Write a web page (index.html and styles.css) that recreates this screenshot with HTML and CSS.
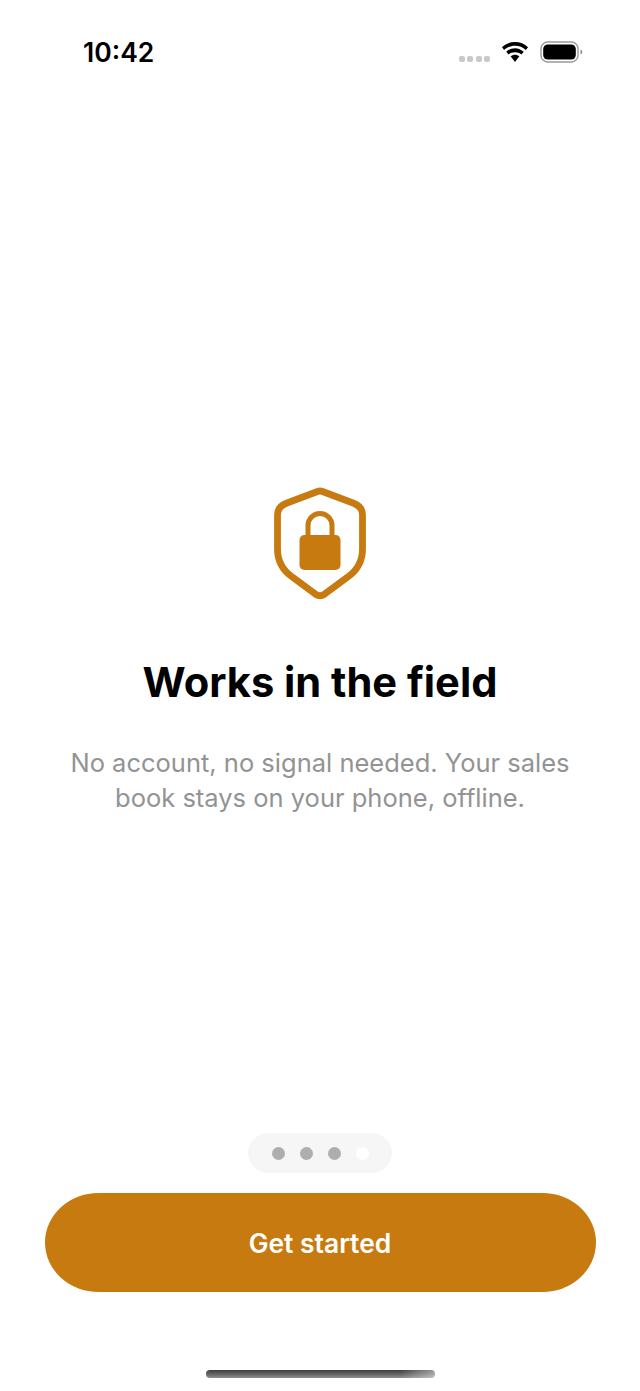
FILE: index.html
```html
<!DOCTYPE html>
<html lang="en">
<head>
<meta charset="utf-8">
<title>Works in the field</title>
<link rel="stylesheet" href="styles.css">
</head>
<body>
<div class="screen">
  <header class="status">
    <span class="time">10:42</span>
    <div class="status-icons">
      <div class="signal"><i></i><i></i><i></i><i></i></div>
      <svg class="wifi" width="26" height="20" viewBox="2 0.7 22 16.900"><path d="M13 3.900c3.500 0 6.800 1.300 9.200 3.500l1.800-2.300C21.100 2.300 17.200.7 13 .7S4.900 2.300 2 5.100l1.800 2.300C6.200 5.200 9.500 3.900 13 3.900z"/><path d="M13 9.300c2.100 0 4 .7 5.500 1.900l1.900-2.300C18.400 7.200 15.800 5.900 13 5.900S7.600 7.200 5.600 8.900l1.900 2.300C9 10 10.900 9.300 13 9.300z"/><path d="M13 11.400c-1.400 0-2.600.5-3.700 1.300L13 17.600l3.700-4.900c-1.100-.8-2.300-1.300-3.700-1.300z"/></svg>
      <svg class="battery" width="44" height="22" viewBox="0 0 44 22"><rect x="1" y="1" width="37" height="20" rx="6.500" fill="none" stroke="#9a9a9a" stroke-width="1.400"/><rect x="3.200" y="3.400" width="32.600" height="15.200" rx="4.500" fill="#000"/><path d="M40.500 8.500c1.200.4 1.800 1.300 1.800 2.500s-.6 2.100-1.800 2.500z" fill="#8a8a8a"/></svg>
    </div>
  </header>

  <main class="hero">
    <svg class="shield" width="92" height="114" viewBox="0 0 92 114">
      <path class="shield-line" d="M43.500 4.500 Q46 3.500 48.500 4.500 L79 16 Q88.500 19.500 88.500 28 L88.500 62 Q88.500 80 73 90.500 L50 107.500 Q46 110 42 107.500 L19 90.500 Q3.500 80 3.500 62 L3.500 28 Q3.500 19.500 13 16 Z"/>
      <path class="shield-line thin" d="M34 50 V38.500 a12 12 0 0 1 24 0 V50"/>
      <rect class="shield-fill" x="25.500" y="48" width="41" height="35" rx="5"/>
    </svg>
    <h1 class="title">Works in the field</h1>
    <p class="copy">No account, no signal needed. Your sales book stays on your phone, offline.</p>
  </main>

  <footer class="actions">
    <div class="pager"><i></i><i></i><i></i><i class="on"></i></div>
    <button class="cta" type="button">Get started</button>
    <div class="home"></div>
  </footer>
</div>
</body>
</html>
```
FILE: styles.css
```css
* { box-sizing: border-box; }
html, body { margin: 0; padding: 0; background: #fff; }
body { font-family: Inter, "Liberation Sans", sans-serif; color: #000; }
.screen { width: 640px; height: 1391px; display: flex; flex-direction: column; overflow: hidden; }

.status { height: 84px; padding: 35.500px 56px 0 83px; display: flex; justify-content: space-between; align-items: flex-start; }
.time { font-size: 26.500px; font-weight: 600; line-height: 32px; letter-spacing: 0; }
.status-icons { display: flex; align-items: center; gap: 12px; height: 32px; margin-top: 0.500px; }
.signal { display: flex; gap: 2.500px; margin-top: 13px; }
.signal i { width: 6px; height: 6px; border-radius: 2px; background: #c9c9c9; display: block; }
.wifi { fill: #000; display: block; }
.battery { display: block; }

.hero { height: 1049px; padding-top: 403px; display: flex; flex-direction: column; align-items: center; }
.shield { display: block; }
.shield-line { fill: none; stroke: #c77a10; stroke-width: 6.800; stroke-linejoin: round; }
.shield-line.thin { stroke-width: 5; }
.shield-fill { fill: #c77a10; }
.title { margin: 55px 0 0; font-size: 41.600px; line-height: 52px; font-weight: 700; text-align: center; letter-spacing: 0; }
.copy { margin: 37px 0 0; width: 520px; font-size: 25.500px; line-height: 35px; font-weight: 400; color: #939393; text-align: center; }

.actions { flex: 1; display: flex; flex-direction: column; align-items: center; }
.pager { width: 144px; height: 40px; border-radius: 20px; background: #f6f6f6; display: flex; align-items: center; justify-content: center; gap: 15px; }
.pager i { width: 13px; height: 13px; border-radius: 50%; background: #aeaeae; display: block; }
.pager i.on { background: #fff; }
.cta { margin-top: 20px; width: 551px; height: 99px; padding: 1px 0 0; border: 0; border-radius: 54px / 50px; background: #c77a10; color: #fff; font: 600 26.400px/32px Inter, "Liberation Sans", sans-serif; }
.home { margin-top: 78px; width: 229px; height: 8px; border-radius: 4px; background: linear-gradient(90deg, rgba(255,255,255,0) 85%, rgba(255,255,255,.45) 100%), linear-gradient(180deg, #3f3f3f 0%, #6a6a6a 60%, #909090 100%); }
```
